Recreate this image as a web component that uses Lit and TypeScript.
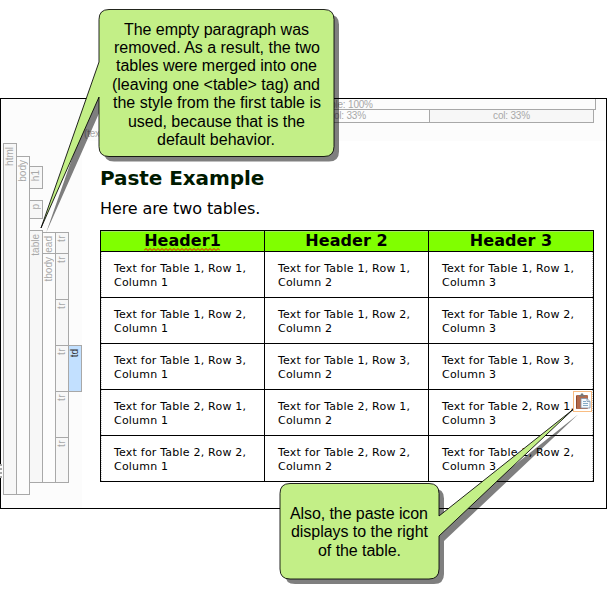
import { LitElement, html, svg, css } from "lit";
import { customElement, property } from "lit/decorators.js";

interface Line { t: string; x: number; y: number; w: number; }

@customElement("call-out")
class CallOut extends LitElement {
  @property() shape = "";
  @property({ attribute: false }) lines: Line[] = [];
  static styles = css`
    :host { display: block; position: absolute; left: 0; top: 0; pointer-events: none; }
    svg { display: block; }
    .shade { fill: #000; fill-opacity: 0.5; }
    .body { fill: #c3ef87; stroke: #000; stroke-width: 1; stroke-opacity: 0.85; }
    text { font: 16px "Liberation Sans", Arial, sans-serif; fill: #000; }
  `;
  render() {
    return html`<svg width="607" height="594" viewBox="0 0 607 594">
      <path class="shade" d=${this.shape} transform="translate(5 5)"></path>
      <path class="body" d=${this.shape}></path>
      ${this.lines.map((l) => svg`<text x=${l.x} y=${l.y} textLength=${l.w}>${l.t}</text>`)}
    </svg>`;
  }
}

@customElement("tag-bars")
class TagBars extends LitElement {
  static styles = css`
    :host { display: flex; box-sizing: border-box; width: 81px; height: 409px; padding-left: 2px; background: #fcfcfc; font: 10px/12px "Liberation Sans", Arial, sans-serif; color: #a8a8a8; }
    .col { width: 14px; margin-right: -1px; flex: none; }
    .bar { box-sizing: border-box; width: 14px; border: 1px solid #a8a8a8; margin-bottom: -1px; overflow: hidden; padding-top: 3px; }
    .dark { background: #f7f7f7; }
    .hot { background: #c2e0ff; color: #333; position: relative; }
    .name { display: flex; justify-content: flex-end; writing-mode: vertical-rl; transform: rotate(180deg); width: 11px; line-height: 11px; white-space: nowrap; }
    .short { padding-top: 2px; letter-spacing: 0.5px; }
  `;
  private bar(name: string, top: number, height: number, tone = "") {
    return html`<div class="bar ${tone}" style="margin-top:${top}px;height:${height}px"><div class="name">${name}</div></div>`;
  }
  render() {
    return html`
      <div class="col">${this.bar("html", 44, 352, "dark")}</div>
      <div class="col">${this.bar("body", 57, 339)}</div>
      <div class="col">${this.bar("h1", 67, 23, "dark")}${this.bar("p", 12, 19, "dark")}${this.bar("table", 12, 253, "dark")}</div>
      <div class="col">${this.bar("thead", 133, 22)}${this.bar("tbody", 0, 230)}</div>
      <div class="col">${this.bar("tr", 133, 22, "dark short")}${[47, 47, 47, 47, 46].map((h) => this.bar("tr", 0, h, "dark short"))}</div>
      <div class="col">${this.bar("td", 246, 47, "hot")}</div>`;
  }
}

@customElement("app-root")
class AppRoot extends LitElement {
  static styles = css`
    :host { display: block; position: relative; width: 607px; height: 594px; overflow: hidden; background: #fff; font-family: "DejaVu Sans", Verdana, sans-serif; color: #000; padding-top: 98px; box-sizing: border-box; }
    .win { box-sizing: border-box; width: 607px; height: 411px; border: 1px solid #000; display: flex; background: #fff; }
    .main { flex: 1; min-width: 0; }
    .rulers { height: 42px; background: #fcfcfc; padding-left: 18px; box-sizing: border-box; font: 10px/11px "Liberation Sans", Arial, sans-serif; letter-spacing: -0.2px; color: #a8a8a8; text-align: center; }
    .whole { box-sizing: border-box; width: 496px; height: 11px; border: solid #a8a8a8; border-width: 0 1px 1px 0; line-height: 11px; }
    .parts { display: grid; grid-template-columns: 165px 164px 164px; width: 494px; height: 13px; box-sizing: border-box; border: solid #a8a8a8; border-width: 0 1px 1px 0; line-height: 12px; }
    .part { background: #f7f7f7; }
    .part:nth-child(2) { background: #fcfcfc; }
    .part + .part { border-left: 1px solid #a8a8a8; }
    .hint { text-align: left; margin: 5px 0 0 -16px; }
    h1 { font-size: 20px; line-height: 24px; margin: 25px 0 0 18px; letter-spacing: -0.08px; color: #001a00; }
    p { font-size: 16px; line-height: 20px; margin: 9px 0 0 18px; letter-spacing: -0.1px; }
    table { border-collapse: separate; border-spacing: 0; table-layout: fixed; margin: 11px 0 0 18px; width: 494px; border: solid #000; border-width: 1px 0 0 1px; box-sizing: border-box; }
    .c { width: 164px; }
    .last { width: 165px; }
    th, td { box-sizing: border-box; border: solid #000; border-width: 0 1px 1px 0; padding: 0; }
    th { height: 21px; background: #80ff00; font-size: 16px; line-height: 19px; padding-bottom: 1px; letter-spacing: 0.05px; box-shadow: inset 0 1px rgba(200, 200, 200, 0.5); }
    td { height: 46px; padding: 3px 0 0 13px; font-size: 11px; line-height: 14px; vertical-align: middle; white-space: nowrap; letter-spacing: 0.21px; }
    td:first-child { background: repeating-linear-gradient(#ccc 0 1px, #fff 1px 2px) left / 1px 100% no-repeat; }
    td:last-child { background: repeating-linear-gradient(#bbb 0 1px, #fff 1px 2px) right / 1px 100% no-repeat; }
    .typo { display: inline-block; position: relative; }
    .wave { position: absolute; left: 0; bottom: -1px; }
    .paste { position: absolute; left: 573px; top: 391px; }
    .marks { position: absolute; left: 0; top: 464px; width: 2px; height: 14px; background: repeating-linear-gradient(#aaa 0 2px, #fcfcfc 2px 4px); }
  `;
  render() {
    const rows = [[1, 1], [1, 2], [1, 3], [2, 1], [2, 2]];
    return html`
      <div class="win">
        <tag-bars></tag-bars>
        <div class="main">
          <div class="rulers">
            <div class="whole">table: 100%</div>
            <div class="parts"><div class="part">col: 33%</div><div class="part">col: 33%</div><div class="part">col: 33%</div></div>
            <div class="hint">(text)</div>
          </div>
          <h1>Paste Example</h1>
          <p>Here are two tables.</p>
          <table>
            <colgroup><col class="c"><col class="c"><col class="last"></colgroup>
            <tr>
              <th><span class="typo">Header1<svg class="wave" width="76" height="3"><path d=${"M0 2.5" + "l2 -2l2 2".repeat(19)} fill="none" stroke="#f00" stroke-width="1"></path></svg></span></th>
              <th>Header 2</th><th>Header 3</th>
            </tr>
            ${rows.map(([t, r]) => html`<tr>${[1, 2, 3].map((c) => html`<td>Text for Table ${t}, Row ${r},<br>Column ${c}</td>`)}</tr>`)}
          </table>
        </div>
      </div>
      <div class="marks"></div>
      <svg class="paste" width="20" height="21" viewBox="0 0 20 21">
        <rect x=".5" y=".5" width="18" height="20" fill="#fff" stroke="#f9bd83"></rect>
        <rect x="3" y="4" width="12" height="14" rx="1" fill="#b4694a"></rect>
        <path d="M3.5 5v12.5" stroke="#8c4a30"></path>
        <path d="M6 5.5V4h1.5l.5-1.500h2l.5 1.500H12v1.500z" fill="#777"></path>
        <path d="M8 7.500h6l3 3V17H8z" fill="#f5f9fc" stroke="#7d96ad" stroke-width=".8"></path>
        <path d="M14 7.500v3h3" fill="none" stroke="#7d96ad" stroke-width=".8"></path>
        <path d="M10 10.500h3M10 12.500h5M10 14.500h5" stroke="#7ba2c0" stroke-width=".9"></path>
      </svg>
      <call-out
        shape="M109 9.500H324Q334 9.500 334 19.500V146.500Q334 156.500 324 156.500H109Q99 156.500 99 146.500V97L41 228L99 62V19.500Q99 9.500 109 9.500Z"
        .lines=${[
          { t: "The empty paragraph was", x: 124, y: 35, w: 185 },
          { t: "removed. As a result, the two", x: 114, y: 53, w: 206 },
          { t: "tables were merged into one", x: 116, y: 71, w: 201 },
          { t: "(leaving one <table> tag) and", x: 112, y: 90, w: 208 },
          { t: "the style from the first table is", x: 113, y: 108, w: 208 },
          { t: "used, because that is the", x: 128, y: 127, w: 177 },
          { t: "default behavior.", x: 157, y: 145, w: 118 },
        ]}></call-out>
      <call-out
        shape="M290 483.500H429Q439 483.500 439 493.500V516L573 409.500L439 536V569Q439 579 429 579H290Q280 579 280 569V493.500Q280 483.500 290 483.500Z"
        .lines=${[
          { t: "Also, the paste icon", x: 290, y: 519, w: 138 },
          { t: "displays to the right", x: 291, y: 537, w: 137 },
          { t: "of the table.", x: 318, y: 556, w: 83 },
        ]}></call-out>`;
  }
}
